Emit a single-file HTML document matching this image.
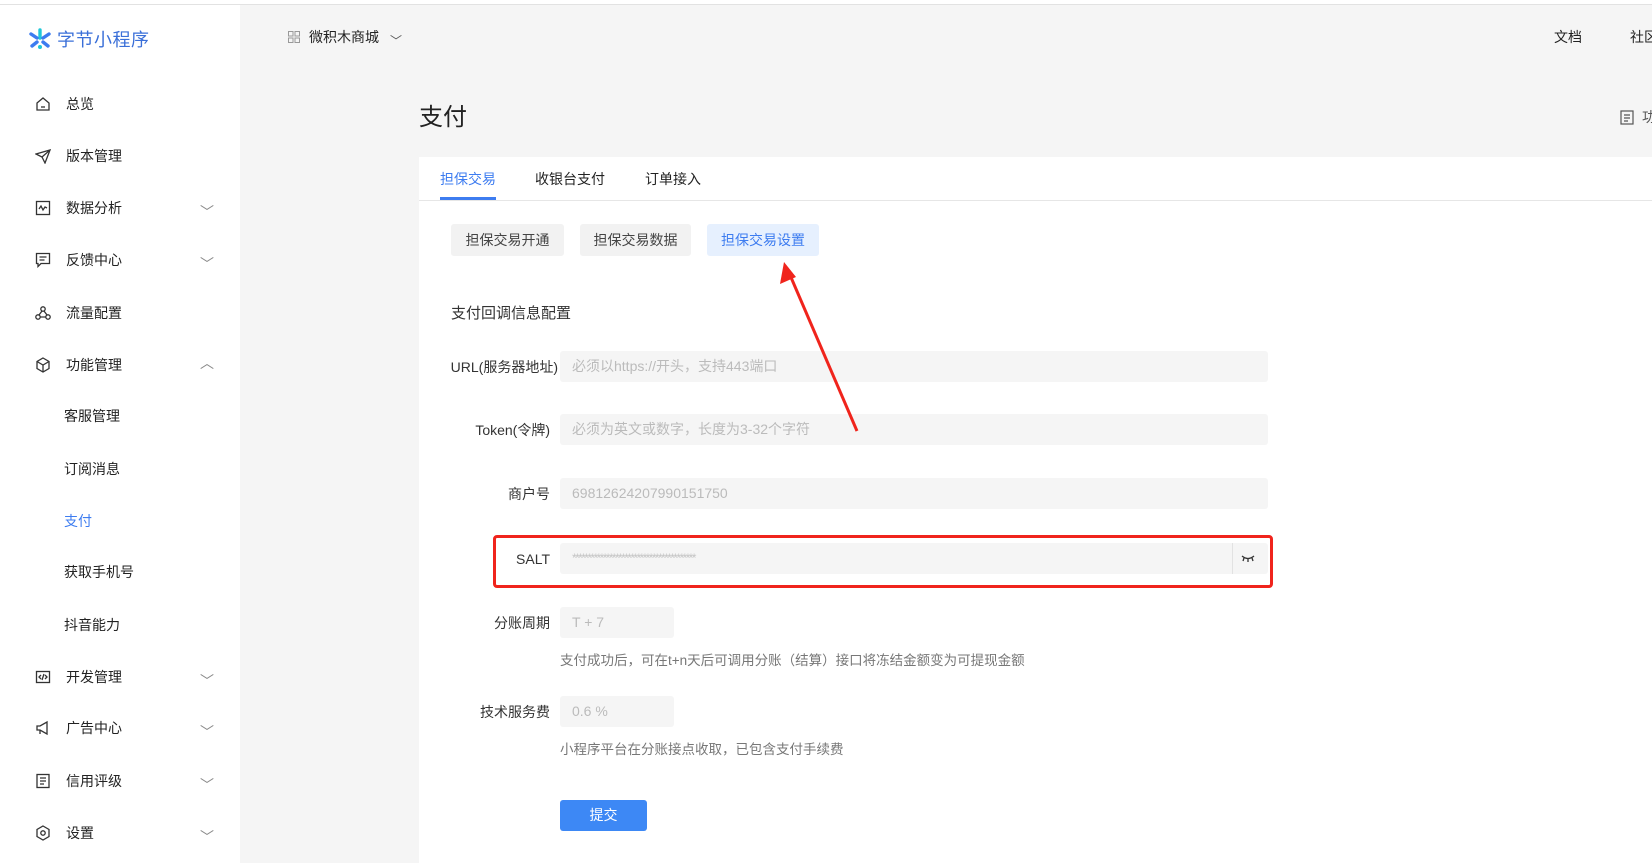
<!DOCTYPE html>
<html><head><meta charset="utf-8"><style>
*{margin:0;padding:0;box-sizing:border-box}
body{width:1652px;height:863px;overflow:hidden;background:#f5f5f5;font-family:"Liberation Sans","Noto Sans CJK SC",sans-serif;font-size:14px;color:#222;position:relative}
.abs{position:absolute;white-space:nowrap}
.topline{left:0;top:0;width:1652px;height:5px;background:#fff;border-bottom:1px solid #e2e2e2}
.side{left:0;top:5px;width:240px;height:858px;background:#fff}
.nav{position:absolute;left:0;width:240px;height:20px;line-height:20px}
.nav svg{position:absolute;left:35px;top:2px}
.nav .t{position:absolute;left:66px}
.nav .c{position:absolute;left:200px;top:4px;color:#888}
.sub{position:absolute;left:64px;line-height:20px}
.card{left:419px;top:157px;width:1233px;height:706px;background:#fff}
.tab{position:absolute;top:12px;font-size:14px}
.btn{position:absolute;top:67px;height:32px;line-height:32px;text-align:center;background:#f2f2f2;color:#444;border-radius:3px;font-size:14px}
.lbl{position:absolute;width:140px;text-align:right;line-height:32px;color:#333}
.inp{position:absolute;height:31px;background:#f5f5f5;border-radius:3px;color:#bbb;line-height:31px;padding-left:12px;font-size:14px}
.help{position:absolute;left:141px;color:#777;font-size:13.5px}
</style></head><body>
<div class="abs topline"></div>
<div class="abs side">
  <div class="abs" style="left:28px;top:22px;height:24px;display:flex;align-items:center">
    <svg width="24" height="24" viewBox="0 0 24 24"><g stroke-linecap="round" stroke-width="3.4"><line x1="12" y1="3" x2="12" y2="11" stroke="#1fc8d8"/><line x1="3" y1="7" x2="9" y2="11" stroke="#3d7cf0"/><line x1="21" y1="7" x2="15" y2="11" stroke="#3d7cf0"/><line x1="9" y1="15" x2="4" y2="19" stroke="#3d7cf0"/><line x1="15" y1="15" x2="20" y2="19" stroke="#3d7cf0"/></g><circle cx="12" cy="20" r="2" fill="#1fc8d8"/></svg>
    <span style="margin-left:5px;font-size:18px;color:#3a6fd8;letter-spacing:0.5px">字节小程序</span>
  </div>
</div>
<div class="nav" style="top:94px"><svg width="16" height="16" viewBox="0 0 16 16" fill="none" stroke="#333" stroke-width="1.3"><path d="M2 7L8 2l6 5v7H2z"/><path d="M6 11h4"/></svg><span class="t">总览</span></div>
<div class="nav" style="top:146px"><svg width="16" height="16" viewBox="0 0 16 16" fill="none" stroke="#333" stroke-width="1.3"><path d="M1 6l14-4-5 13-3-6z"/><path d="M7 9l8-7"/></svg><span class="t">版本管理</span></div>
<div class="nav" style="top:198px"><svg width="16" height="16" viewBox="0 0 16 16" fill="none" stroke="#333" stroke-width="1.3"><rect x="1.5" y="1.5" width="13" height="13"/><path d="M4 9l2-3 2 4 2-3 2 1"/></svg><span class="t">数据分析</span><span class="c">﹀</span></div>
<div class="nav" style="top:250px"><svg width="16" height="16" viewBox="0 0 16 16" fill="none" stroke="#333" stroke-width="1.3"><path d="M1.5 1.5h13v10H6l-3 3v-3H1.5z"/><path d="M4.5 5h7M4.5 8h5"/></svg><span class="t">反馈中心</span><span class="c">﹀</span></div>
<div class="nav" style="top:303px"><svg width="16" height="16" viewBox="0 0 16 16" fill="none" stroke="#333" stroke-width="1.3"><circle cx="8" cy="4" r="2.2"/><circle cx="3" cy="12" r="2.2"/><circle cx="13" cy="12" r="2.2"/><path d="M7 6L4 10M9 6l3 4M5 12h6"/></svg><span class="t">流量配置</span></div>
<div class="nav" style="top:355px"><svg width="16" height="16" viewBox="0 0 16 16" fill="none" stroke="#333" stroke-width="1.3"><path d="M8 1l6 3.5v7L8 15l-6-3.5v-7z"/><path d="M2 4.5L8 8l6-3.5M8 8v7"/></svg><span class="t">功能管理</span><span class="c" style="top:-2px">︿</span></div>
<div class="sub" style="top:406px">客服管理</div>
<div class="sub" style="top:459px">订阅消息</div>
<div class="sub" style="top:511px;color:#3d7cf0">支付</div>
<div class="sub" style="top:562px">获取手机号</div>
<div class="sub" style="top:615px">抖音能力</div>
<div class="nav" style="top:667px"><svg width="16" height="16" viewBox="0 0 16 16" fill="none" stroke="#333" stroke-width="1.3"><rect x="1.5" y="2.5" width="13" height="11"/><path d="M6 6L4 8l2 2M10 6l2 2-2 2M9 5l-2 6"/></svg><span class="t">开发管理</span><span class="c">﹀</span></div>
<div class="nav" style="top:718px"><svg width="16" height="16" viewBox="0 0 16 16" fill="none" stroke="#333" stroke-width="1.3"><path d="M2 6h3l7-4v12L5 10H2z"/><path d="M5 10v4"/></svg><span class="t">广告中心</span><span class="c">﹀</span></div>
<div class="nav" style="top:771px"><svg width="16" height="16" viewBox="0 0 16 16" fill="none" stroke="#333" stroke-width="1.3"><rect x="2" y="1.5" width="12" height="13"/><path d="M5 5h6M5 8h6M5 11h4"/></svg><span class="t">信用评级</span><span class="c">﹀</span></div>
<div class="nav" style="top:823px"><svg width="16" height="16" viewBox="0 0 16 16" fill="none" stroke="#333" stroke-width="1.3"><path d="M8 1l6 3.5v7L8 15l-6-3.5v-7z"/><circle cx="8" cy="8" r="2.2"/></svg><span class="t">设置</span><span class="c">﹀</span></div>

<svg class="abs" style="left:288px;top:31px" width="12" height="12" viewBox="0 0 12 12" fill="none" stroke="#999"><rect x=".5" y=".5" width="4.5" height="4.5"/><rect x="7" y=".5" width="4.5" height="4.5"/><rect x=".5" y="7" width="4.5" height="4.5"/><rect x="7" y="7" width="4.5" height="4.5"/></svg>
<div class="abs" style="left:309px;top:27px;line-height:20px">微积木商城</div>
<div class="abs" style="left:390px;top:31px;line-height:20px;color:#555;font-size:12px">﹀</div>
<div class="abs" style="left:1554px;top:27px;line-height:20px">文档</div>
<div class="abs" style="left:1630px;top:27px;line-height:20px">社区</div>
<div class="abs" style="left:419px;top:102px;font-size:24px;line-height:32px">支付</div>
<svg class="abs" style="left:1620px;top:110px" width="14" height="15" viewBox="0 0 14 15" fill="none" stroke="#555" stroke-width="1.2"><rect x="1" y="1" width="12" height="13"/><path d="M4 5h6M4 8h6M4 11h4"/></svg>
<div class="abs" style="left:1642px;top:107px;line-height:20px;color:#555">功</div>

<div class="abs card">
  <div class="tab" style="left:21px;color:#3d7cf0">担保交易</div>
  <div class="abs" style="left:21px;top:40px;width:56px;height:3px;background:#3d7cf0"></div>
  <div class="tab" style="left:116px">收银台支付</div>
  <div class="tab" style="left:226px">订单接入</div>
  <div class="abs" style="left:0;top:43px;width:1233px;height:1px;background:#e6e6e6"></div>
  <div class="btn" style="left:32px;width:113px">担保交易开通</div>
  <div class="btn" style="left:161px;width:111px">担保交易数据</div>
  <div class="btn" style="left:288px;width:112px;background:#e6f0fe;color:#3d7cf0">担保交易设置</div>
  <div class="abs" style="left:32px;top:145px;font-size:15px;color:#333">支付回调信息配置</div>

  <div class="lbl" style="top:194px;left:0;width:139px">URL(服务器地址)</div>
  <div class="inp" style="left:141px;top:194px;width:708px">必须以https://开头，支持443端口</div>
  <div class="lbl" style="top:257px;left:-9px">Token(令牌)</div>
  <div class="inp" style="left:141px;top:257px;width:708px">必须为英文或数字，长度为3-32个字符</div>
  <div class="lbl" style="top:321px;left:-9px">商户号</div>
  <div class="inp" style="left:141px;top:321px;width:708px">69812624207990151750</div>
  <div class="lbl" style="top:386px;left:-9px">SALT</div>
  <div class="inp" style="left:141px;top:386px;width:708px;font-size:12px;letter-spacing:-1.6px;color:#c4c4c4">****************************************</div>
  <svg class="abs" style="left:822px;top:396px" width="14" height="10" viewBox="0 0 14 10" fill="none" stroke="#333" stroke-width="1.3"><path d="M1 3q6 5 12 0"/><path d="M3 5l-1 3M7 6v3M11 5l1 3"/></svg>
  <div class="abs" style="left:813px;top:386px;width:1px;height:31px;background:#e2e2e2"></div>
  <div class="abs" style="left:74px;top:378px;width:780px;height:53px;border:3px solid #f0241c;border-radius:4px"></div>
  <div class="lbl" style="top:450px;left:-9px">分账周期</div>
  <div class="inp" style="left:141px;top:450px;width:114px">T + 7</div>
  <div class="help" style="top:492px">支付成功后，可在t+n天后可调用分账（结算）接口将冻结金额变为可提现金额</div>
  <div class="lbl" style="top:539px;left:-9px">技术服务费</div>
  <div class="inp" style="left:141px;top:539px;width:114px">0.6 %</div>
  <div class="help" style="top:581px">小程序平台在分账接点收取，已包含支付手续费</div>
  <div class="abs" style="left:141px;top:643px;width:87px;height:31px;background:#3d88f5;border-radius:3px;color:#fff;text-align:center;line-height:31px">提交</div>
</div>
<svg class="abs" style="left:0;top:0" width="1652" height="863"><line x1="857" y1="431" x2="790" y2="275" stroke="#f0241c" stroke-width="3"/><polygon points="784,262 780,284 796,277" fill="#f0241c"/></svg>
</body></html>
